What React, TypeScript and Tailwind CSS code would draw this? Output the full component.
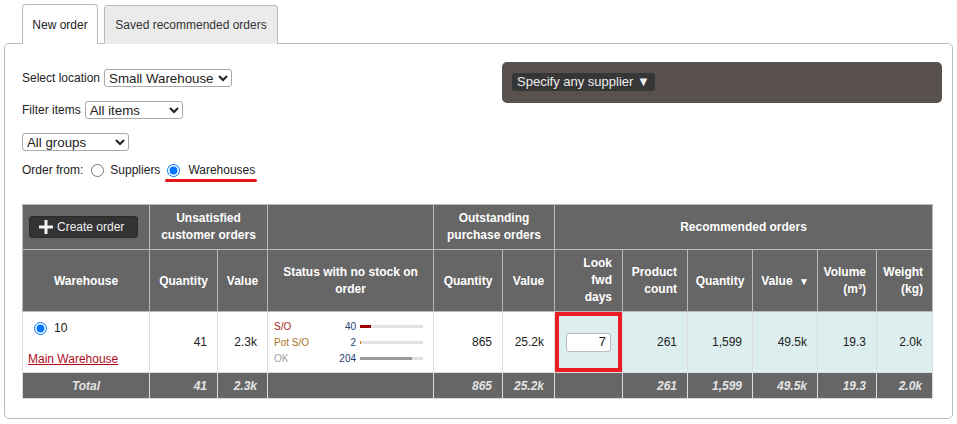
import { useState } from "react";

const font = { fontFamily: '"Liberation Sans", Arial, sans-serif' };

const StatusLine = ({
  label,
  labelClass,
  count,
  fill,
  fillClass,
}: {
  label: string;
  labelClass: string;
  count: number;
  fill: number;
  fillClass: string;
}) => (
  <div className="flex h-4 items-center">
    <span className={`flex-1 ${labelClass}`}>{label}</span>
    <span className="text-[#1f3d70]">{count}</span>
    <div className="ml-[4px] h-[3px] w-[63px] bg-[#e2e2e2]">
      <div className={`h-full ${fillClass}`} style={{ width: fill }} />
    </div>
  </div>
);

export default function App() {
  const [source, setSource] = useState("warehouses");
  const [days, setDays] = useState("7");

  const th = "border border-[#b9b9b9] font-bold text-white";
  const td = "border border-[#dcdcdc] pr-[10px] text-right align-middle";
  const tdRec = `${td} bg-[#ddeeee]`;
  const tt = "border border-[#dcdcdc] pr-[10px] text-right italic font-bold text-[#e4e4e4]";
  const sel = "h-[18px] rounded-[3px] border border-[#a9a9a9] bg-white pl-0 pr-0 text-[13.3px]";

  return (
    <div className="h-[424px] w-[957px] bg-white pt-[4px] text-[12px] text-[#222]" style={font}>
      {/* tabs */}
      <div className="relative z-10 flex items-end gap-[6px] pl-[22px]">
        <div className="flex h-[40px] w-[76px] items-center justify-center rounded-t-[4px] border border-b-0 border-[#bcbcbc] bg-white">
          New order
        </div>
        <div className="flex h-[39px] w-[174px] items-center justify-center rounded-t-[4px] border border-b-0 border-[#bcbcbc] bg-[#ebebeb] text-[#333]">
          Saved recommended orders
        </div>
      </div>

      <div className="-mt-px ml-[4px] h-[376px] w-[949px] rounded-[5px] border border-[#bcbcbc] px-[17px] pt-[18px]">
        <div className="flex items-start justify-between">
          <div className="flex flex-col pt-[7px]">
            <div className="flex h-[18px] items-center">
              <span className="mr-[4px]">Select location</span>
              <select className={`${sel} w-[128px]`}>
                <option>Small Warehouse</option>
              </select>
            </div>
            <div className="mt-[14px] flex h-[18px] items-center">
              <span className="mr-[4px]">Filter items</span>
              <select className={`${sel} w-[98px]`}>
                <option>All items</option>
              </select>
            </div>
            <div className="mt-[14px] flex h-[18px] items-center">
              <select className={`${sel} w-[107px]`}>
                <option>All groups</option>
              </select>
            </div>
            <div className="mt-[11px] flex h-[16px] items-center">
              <span>Order from:</span>
              <label className="ml-[8px] flex items-center">
                <input
                  type="radio"
                  checked={source === "suppliers"}
                  onChange={() => setSource("suppliers")}
                  className="m-0 h-[13px] w-[13px]"
                />
                <span className="ml-[6px]">Suppliers</span>
              </label>
              <label className="relative ml-[7px] flex items-center">
                <input
                  type="radio"
                  checked={source === "warehouses"}
                  onChange={() => setSource("warehouses")}
                  className="m-0 h-[13px] w-[13px]"
                />
                <span className="ml-[8px]">Warehouses</span>
                <span className="absolute -left-[2px] top-[18px] h-[3px] w-[92px] rounded-full bg-[#e4181c]" />
              </label>
            </div>
          </div>

          <div className="-mr-[7px] h-[41px] w-[440px] rounded-[5px] bg-[#58514d] pl-[10px] pt-[11px]">
            <button className="h-[18px] rounded-[3px] bg-[#363636] px-[5px] text-[13px] leading-[18px] text-[#eeeeee]">
              Specify any supplier ▼
            </button>
          </div>
        </div>

        <table className="mt-[26px] w-[910px] table-fixed border-collapse">
          <colgroup>
            <col className="w-[127px]" />
            <col className="w-[68px]" />
            <col className="w-[50px]" />
            <col className="w-[166px]" />
            <col className="w-[69px]" />
            <col className="w-[52px]" />
            <col className="w-[68px]" />
            <col className="w-[65px]" />
            <col className="w-[65px]" />
            <col className="w-[65px]" />
            <col className="w-[59px]" />
            <col className="w-[56px]" />
          </colgroup>
          <thead className="bg-[#666666]">
            <tr className="h-[45px]">
              <th className={`${th} pl-[6px] text-left`}>
                <button className="flex h-[22px] w-[109px] items-center rounded-[3px] border border-[#2b2b2b] bg-[#333333] pl-[9px] font-normal text-[#f0f0f0]">
                  <svg width="14" height="14" viewBox="0 0 14 14" className="mr-[4px]">
                    <path d="M5.5 0h3v5.5H14v3H8.5V14h-3V8.5H0v-3h5.5z" fill="#f2f2f2" />
                  </svg>
                  Create order
                </button>
              </th>
              <th colSpan={2} className={`${th} leading-[17px]`}>
                Unsatisfied
                <br />
                customer orders
              </th>
              <th className={th}></th>
              <th colSpan={2} className={`${th} leading-[17px]`}>
                Outstanding
                <br />
                purchase orders
              </th>
              <th colSpan={6} className={th}>
                Recommended orders
              </th>
            </tr>
            <tr className="h-[62px]">
              <th className={th}>Warehouse</th>
              <th className={th}>Quantity</th>
              <th className={th}>Value</th>
              <th className={`${th} px-[10px] leading-[17px]`}>Status with no stock on order</th>
              <th className={th}>Quantity</th>
              <th className={th}>Value</th>
              <th className={`${th} pr-[10px] text-right leading-[17px]`}>
                Look
                <br />
                fwd
                <br />
                days
              </th>
              <th className={`${th} pr-[10px] text-right leading-[17px]`}>
                Product
                <br />
                count
              </th>
              <th className={th}>Quantity</th>
              <th className={th}>
                Value <span className="ml-[3px] text-[10px]">▼</span>
              </th>
              <th className={`${th} pr-[10px] text-right leading-[17px]`}>
                Volume
                <br />
                (m³)
              </th>
              <th className={`${th} pr-[9px] text-right leading-[17px]`}>
                Weight
                <br />
                (kg)
              </th>
            </tr>
          </thead>
          <tbody>
            <tr className="h-[61px]">
              <td className="border border-[#dcdcdc] pl-[5px] pt-[4px] align-middle">
                <div className="flex h-[16px] items-center pl-[6px]">
                  <input type="radio" defaultChecked className="m-0 h-[13px] w-[13px]" />
                  <span className="ml-[7px]">10</span>
                </div>
                <a href="#" className="mt-[14px] block text-[#b00c1c] underline">
                  Main Warehouse
                </a>
              </td>
              <td className={td}>41</td>
              <td className={td}>2.3k</td>
              <td className="border border-[#dcdcdc] pl-[6px] pr-[10px] text-[10px]">
                <StatusLine label="S/O" labelClass="text-[#a51d1d]" count={40} fill={11} fillClass="bg-[#a00000]" />
                <StatusLine label="Pot S/O" labelClass="text-[#a8731c]" count={2} fill={1} fillClass="bg-[#b8860b]" />
                <StatusLine label="OK" labelClass="text-[#a0a0a0]" count={204} fill={52} fillClass="bg-[#9a9a9a]" />
              </td>
              <td className={td}>865</td>
              <td className={td}>25.2k</td>
              <td className="border border-[#dcdcdc] bg-[#ddeeee] text-center shadow-[inset_0_0_0_4px_#ec1c24]">
                <input
                  value={days}
                  onChange={(e) => setDays(e.target.value)}
                  className="h-[19px] w-[45px] rounded-[3px] border border-[#bbbbbb] bg-white px-[4px] text-right text-[13px] outline-none"
                />
              </td>
              <td className={tdRec}>261</td>
              <td className={tdRec}>1,599</td>
              <td className={tdRec}>49.5k</td>
              <td className={tdRec}>19.3</td>
              <td className={tdRec}>2.0k</td>
            </tr>
            <tr className="h-[26px] bg-[#666666]">
              <td className="border border-[#dcdcdc] text-center font-bold italic text-[#e4e4e4]">Total</td>
              <td className={tt}>41</td>
              <td className={tt}>2.3k</td>
              <td className={tt}></td>
              <td className={tt}>865</td>
              <td className={tt}>25.2k</td>
              <td className={tt}></td>
              <td className={tt}>261</td>
              <td className={tt}>1,599</td>
              <td className={tt}>49.5k</td>
              <td className={tt}>19.3</td>
              <td className={tt}>2.0k</td>
            </tr>
          </tbody>
        </table>
      </div>
    </div>
  );
}
